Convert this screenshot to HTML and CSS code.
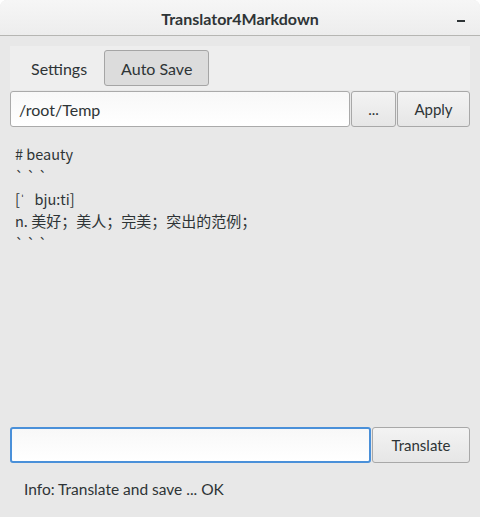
FILE: index.html
```html
<!DOCTYPE html>
<html>
<head>
<meta charset="utf-8">
<link rel="stylesheet" href="styles.css">
</head>
<body>
<div class="window">
  <header class="titlebar">
    <span class="title">Translator4Markdown</span>
    <span class="minimize"></span>
  </header>
  <main class="content">
    <div class="tabbar">
      <span class="tab">Settings</span>
      <span class="tab tab-active">Auto Save</span>
    </div>
    <div class="row">
      <div class="field path">/root/Temp</div>
      <button class="btn btn-dots">...</button>
      <button class="btn btn-apply">Apply</button>
    </div>
    <div class="output">
      <div># beauty</div>
      <div class="ticks">```</div>
      <div>[ˈ&nbsp;&nbsp;&nbsp;bju:ti]</div>
      <div>n. <span class="cjk">美好；美人；完美；突出的范例；</span></div>
      <div class="ticks">```</div>
    </div>
    <div class="row row-bottom">
      <div class="field query"></div>
      <button class="btn btn-translate">Translate</button>
    </div>
    <div class="info">Info: Translate and save ... OK</div>
  </main>
</div>
</body>
</html>
```
FILE: styles.css
```css
html, body {
  margin: 0;
  padding: 0;
}
body {
  width: 480px;
  height: 517px;
  overflow: hidden;
  font-family: Lato, "Noto Sans", sans-serif;
  font-size: 15px;
  color: #2e3436;
}
.window {
  width: 480px;
  height: 517px;
  background: #e8e8e8;
  display: flex;
  flex-direction: column;
  border-radius: 7px 7px 0 0;
  overflow: hidden;
}
.titlebar {
  height: 35px;
  flex: none;
  border-bottom: 1px solid #b6b6b3;
  background: linear-gradient(#f6f6f6, #ededed);
  display: flex;
  align-items: center;
  justify-content: center;
  position: relative;
}
.title {
  font-weight: bold;
  font-size: 16px;
  color: #2e3436;
  padding-top: 2px;
}
.minimize {
  position: absolute;
  right: 15px;
  top: 20px;
  width: 8px;
  height: 2px;
  background: #2e3436;
}
.content {
  flex: 1;
  display: flex;
  flex-direction: column;
  padding: 10px 10px 0 10px;
}
.tabbar {
  background: #eeeeee;
  height: 44px;
  display: flex;
  align-items: flex-start;
  padding: 4px 0 0 4px;
  box-sizing: border-box;
}
.tab {
  height: 36px;
  box-sizing: border-box;
  display: flex;
  align-items: center;
  padding: 0 16px;
  font-size: 16px;
  border: 1px solid transparent;
  border-radius: 3px;
}
.tab-active {
  background: #dcdcdc;
  border-color: #a5a5a5;
}
.row {
  display: flex;
  height: 36px;
  margin-top: 1px;
  gap: 1px;
}
.field {
  flex: 1;
  background: linear-gradient(#f8f8f8, #ffffff);
  border: 1px solid #aaaaaa;
  border-radius: 3px;
  box-sizing: border-box;
  display: flex;
  align-items: center;
  padding: 0 8px;
  font-size: 16px;
}
.btn {
  font-family: inherit;
  font-size: 15px;
  color: #2e3436;
  height: 36px;
  border: 1px solid #a8a8a8;
  border-radius: 3px;
  background: linear-gradient(#f3f3f3, #e6e6e6);
  padding: 0;
  margin: 0;
}
.btn-dots {
  width: 45px;
}
.btn-apply {
  width: 73px;
}
.output {
  flex: 1;
  padding: 16px 5px 0 5px;
  font-family: "Noto Sans CJK SC", sans-serif;
  font-size: 14.5px;
  line-height: 22.3px;
  color: #2e3436;
}
.ticks {
  letter-spacing: 3px;
}
.cjk {
  font-size: 15px;
}
.row-bottom {
  margin-top: 0;
  height: 36px;
}
.query {
  border: 2px solid #4a90d9;
}
.btn-translate {
  width: 98px;
}
.info {
  height: 54px;
  display: flex;
  align-items: center;
  padding-left: 14px;
  padding-bottom: 2px;
  box-sizing: border-box;
  font-size: 15.5px;
}
```
